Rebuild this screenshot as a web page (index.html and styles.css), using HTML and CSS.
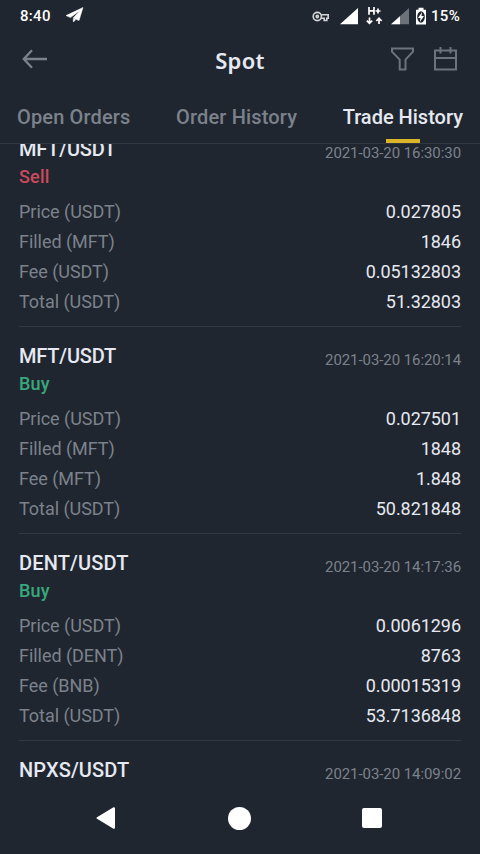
FILE: index.html
```html
<!DOCTYPE html>
<html lang="en">
<head>
<meta charset="utf-8">
<title>Spot – Trade History</title>
<link rel="stylesheet" href="styles.css">
</head>
<body>
<div class="screen">
  <div class="status">
    <span class="clock">8:40</span>
    <svg class="plane" width="18" height="16" viewBox="0 0 18 16"><path d="M17 .5 0 8.600l4.500 2L14 3.400 7.200 11l5.800 2.600zM7.200 11.600 7.400 15l2.300-2.300z" fill="#fff" stroke="#fff" stroke-width=".5"/></svg>
    <svg class="signals" width="118" height="22" viewBox="0 0 118 22">
      <g fill="none" stroke="#d3d5d8" stroke-width="1.6"><circle cx="5.300" cy="9.500" r="4.100"/><circle cx="5.300" cy="9.500" r="1.100"/><path d="M9.200 7.700h7v3.600h-1.400v2.200h-2.600v-2.200h-3"/></g>
      <path d="M46 1v16.300H28z" fill="#fff"/>
      <g fill="none" stroke="#fff" stroke-width="1.700"><path d="M57 0v7.700M62 0v7.700M57 3.900h5M63.500 4h5M66 1.600v4.800"/><path d="M57.500 10.500v6M54.800 13.700l2.700 2.700 2.700-2.700M67 17v-5.500M64.300 14l2.700-2.700 2.700 2.700"/></g>
      <path d="M97 1v16.300H79z" fill="#6d7278"/><path d="M88 9.200v8.100h-9z" fill="#fff"/>
      <path d="M106.500 .8h5v2h2.500v14.600h-10V2.800h2.500z" fill="#fff"/>
      <ellipse cx="109" cy="10" rx="3.800" ry="5.800" fill="#20262f"/><path d="m110 4.900-4 6h2.500l-.6 4 4.100-6h-2.500z" fill="#fff"/>
    </svg>
    <span class="percent">15%</span>
  </div>
  <header class="header">
    <svg class="back" width="26" height="20" viewBox="0 0 26 20"><path d="M10 1.300 1.800 10l8.200 8.700M2 10h23" fill="none" stroke="#7c828c" stroke-width="2.300"/></svg>
    <h1 class="title">Spot</h1>
    <svg class="tools" width="68" height="26" viewBox="0 0 68 26" fill="none" stroke="#6d737c" stroke-width="2">
      <path d="M2 2.500h21v3.100l-7.500 8v9.900h-5.800v-9.900L2 5.600z"/>
      <path d="M45 4.500h21v19H45zM45 12h21M50.500 1v6.500M60.500 1v6.500"/>
    </svg>
  </header>
  <nav class="tabs">
    <span class="tab">Open Orders</span>
    <span class="tab">Order History</span>
    <span class="tab active">Trade History</span>
  </nav>
  <main class="list">
    <div class="trades">
      <section class="trade">
        <div class="head"><span class="pair mft">MFT/USDT</span><time class="date">2021-03-20 16:30:30</time></div>
        <div class="side sell">Sell</div>
        <dl class="rows">
          <div class="row"><dt>Price (USDT)</dt><dd>0.027805</dd></div>
          <div class="row"><dt>Filled (MFT)</dt><dd>1846</dd></div>
          <div class="row"><dt>Fee (USDT)</dt><dd>0.05132803</dd></div>
          <div class="row"><dt>Total (USDT)</dt><dd>51.32803</dd></div>
        </dl>
      </section>
      <section class="trade">
        <div class="head"><span class="pair mft">MFT/USDT</span><time class="date">2021-03-20 16:20:14</time></div>
        <div class="side buy">Buy</div>
        <dl class="rows">
          <div class="row"><dt>Price (USDT)</dt><dd>0.027501</dd></div>
          <div class="row"><dt>Filled (MFT)</dt><dd>1848</dd></div>
          <div class="row"><dt>Fee (MFT)</dt><dd>1.848</dd></div>
          <div class="row"><dt>Total (USDT)</dt><dd>50.821848</dd></div>
        </dl>
      </section>
      <section class="trade">
        <div class="head"><span class="pair">DENT/USDT</span><time class="date">2021-03-20 14:17:36</time></div>
        <div class="side buy">Buy</div>
        <dl class="rows">
          <div class="row"><dt>Price (USDT)</dt><dd>0.0061296</dd></div>
          <div class="row"><dt>Filled (DENT)</dt><dd>8763</dd></div>
          <div class="row"><dt>Fee (BNB)</dt><dd>0.00015319</dd></div>
          <div class="row"><dt>Total (USDT)</dt><dd>53.7136848</dd></div>
        </dl>
      </section>
      <section class="trade">
        <div class="head"><span class="pair">NPXS/USDT</span><time class="date">2021-03-20 14:09:02</time></div>
      </section>
    </div>
  </main>
  <footer class="navbar">
    <svg width="22" height="24" viewBox="0 0 22 24"><path d="M19 2.200v19.600L2.500 12z" fill="#fff" stroke="#fff" stroke-width="2" stroke-linejoin="round"/></svg>
    <span class="home"></span>
    <span class="recent"></span>
  </footer>
</div>
</body>
</html>
```
FILE: styles.css
```css
* { box-sizing: border-box; }
body { margin: 0; background: #20262f; }
.screen {
  width: 480px;
  height: 854px;
  display: flex;
  flex-direction: column;
  overflow: hidden;
  background: #20262f;
  color: #e6e9f2;
  font-family: Roboto, "Liberation Sans", sans-serif;
}
.status {
  height: 32px;
  display: flex;
  align-items: center;
  padding: 0 20px;
  color: #fff;
  font-size: 15px;
  font-weight: 500;
}
.clock { width: 46px; letter-spacing: .3px; }
.plane { margin-top: -2px; }
.signals { margin-left: auto; margin-top: 3px; }
.percent { width: 30px; white-space: nowrap; text-align: right; letter-spacing: .3px; }
.header {
  height: 59px;
  display: grid;
  grid-template-columns: 68px 1fr 68px;
  align-items: center;
  padding: 0 22px;
}
.back { margin-top: -5px; }
.title {
  margin: -4px 0 0;
  text-align: center;
  font-family: "Noto Sans", Roboto, sans-serif;
  font-size: 22px;
  font-weight: 600;
  letter-spacing: .3px;
}
.tools { margin-top: -6px; }
.tabs {
  height: 53px;
  flex: none;
  display: flex;
  justify-content: space-between;
  padding: 0 17px;
  border-bottom: 1px solid #323841;
  color: #7c828c;
  font-size: 20px;
  font-weight: 500;
  line-height: 52px;
  letter-spacing: .15px;
  white-space: nowrap;
}
.active { position: relative; color: #e6e9f2; letter-spacing: 0; }
.active::after {
  content: "";
  position: absolute;
  left: 50%;
  bottom: 0;
  width: 34px;
  height: 4px;
  margin-left: -17px;
  background: #dcb42a;
}
.list { height: 640px; flex: none; overflow: hidden; padding: 0 19px; }
.trades { margin-top: -24px; }
.trade { height: 207px; padding-top: 15px; border-bottom: 1px solid #323841; }
.head { height: 28px; display: flex; justify-content: space-between; line-height: 28px; }
.pair { font-size: 20px; font-weight: 500; letter-spacing: .15px; }
.mft { letter-spacing: -.2px; }
.date { padding-top: 4px; color: #7c828c; font-size: 15px; letter-spacing: -.07px; }
.side { height: 28px; line-height: 28px; font-size: 18px; font-weight: 500; letter-spacing: .2px; }
.sell { color: #c94a5d; }
.buy { color: #38a87c; }
.rows { margin: 6px 0 0; }
.row { height: 30px; display: flex; justify-content: space-between; line-height: 30px; font-size: 18px; }
.row dt { color: #7c828c; letter-spacing: -.04px; }
.row dd { margin: 0; letter-spacing: -.05px; }
.navbar {
  height: 68px;
  display: flex;
  align-items: center;
  justify-content: space-between;
  padding: 0 98px 0 95px;
}
.home { width: 23px; height: 23px; border-radius: 50%; background: #fff; }
.recent { width: 20px; height: 20px; border-radius: 2px; background: #fff; }
```
